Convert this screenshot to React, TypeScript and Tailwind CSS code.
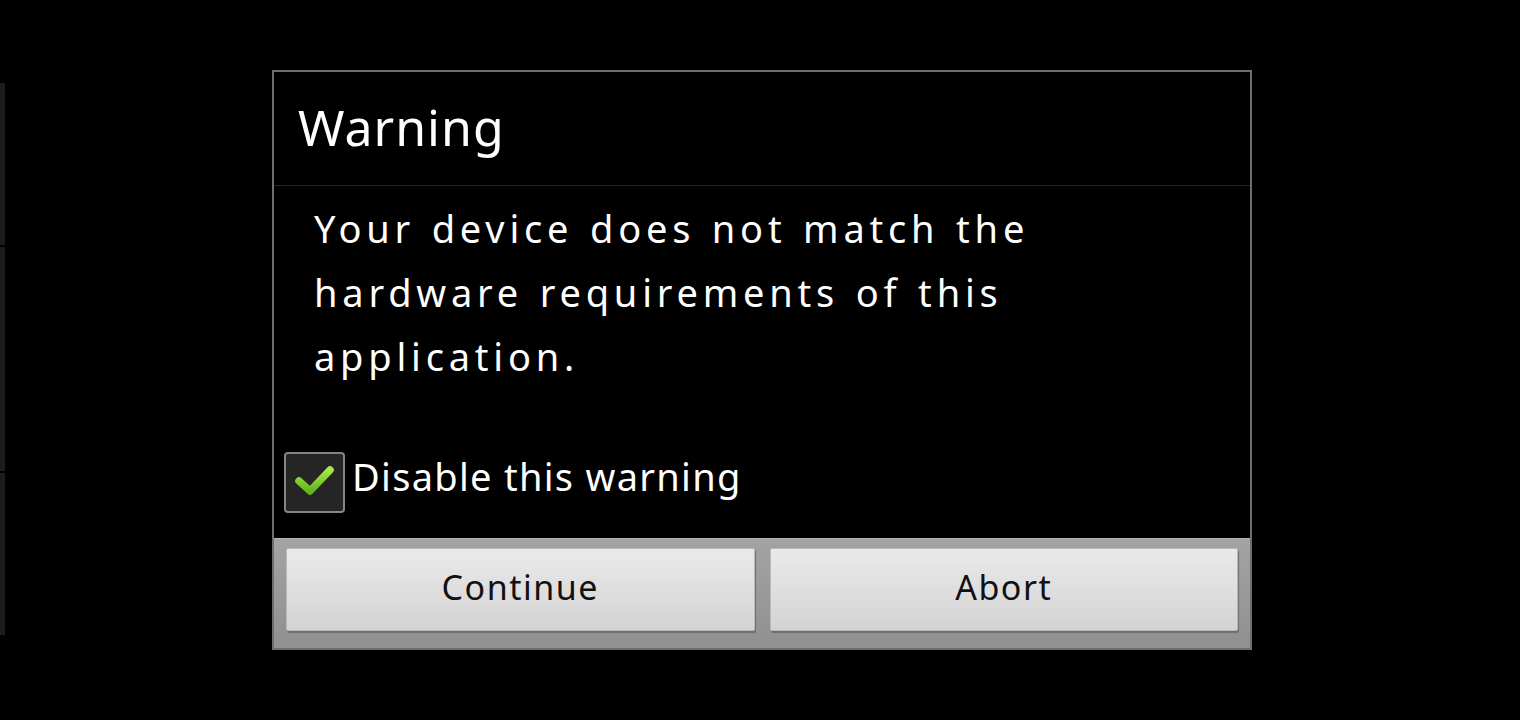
import React from "react";

export default function App() {
  return (
    <div
      className="relative w-[1520px] h-[720px] bg-black overflow-hidden"
      style={{ fontFamily: '"Noto Sans", "Noto Sans CJK JP", sans-serif' }}
    >
      {/* faint background list strip on the left edge */}
      <div className="flex flex-col w-[5px] pt-[83px] gap-[2px]">
        <div className="h-[162px] bg-[#1c1c1c]" />
        <div className="h-[224px] bg-[#1c1c1c]" />
        <div className="h-[162px] bg-[#1c1c1c]" />
      </div>

      {/* dialog */}
      <div className="absolute left-[272px] top-[70px] w-[980px] h-[580px] border-2 border-[#6e6e6e] bg-black flex flex-col">
        <div className="h-[114px] flex items-center pl-[24px] pb-[4px] border-b border-[#262626]">
          <span className="text-white text-[50px] leading-none tracking-[1px]">Warning</span>
        </div>
        <div className="flex-1 flex flex-col">
          <p className="text-white text-[38px] leading-[64px] tracking-[4.8px] [word-spacing:2px] pl-[40px] pr-[40px] pt-[10px]">
            Your device does not match the
            <br />
            hardware requirements of this
            <br />
            application.
          </p>
          <div className="flex-1" />
          <div className="flex items-center pl-[10px] pb-[25px] gap-[7px]">
            <div className="w-[61px] h-[61px] rounded-[4px] border-2 border-[#858585] bg-[#252525] flex items-center justify-center">
              <svg width="57" height="57" viewBox="0 0 57 57">
                <defs>
                  <linearGradient id="chk" x1="0" y1="0" x2="0" y2="1">
                    <stop offset="0" stopColor="#a4ea48" />
                    <stop offset="1" stopColor="#64b51c" />
                  </linearGradient>
                </defs>
                <polyline
                  points="13,27 24,37 44,16"
                  fill="none"
                  stroke="url(#chk)"
                  strokeWidth="7.5"
                  strokeLinejoin="round"
                  strokeLinecap="round"
                />
              </svg>
            </div>
            <span className="text-white text-[38px] leading-none tracking-[1.3px] pb-[14px]">Disable this warning</span>
          </div>
        </div>
        <div className="h-[110px] bg-gradient-to-b from-[#a3a3a3] to-[#909090] border-t border-[#b4b4b4] flex gap-[15px] px-[12px] pt-[9px] pb-[17px]">
          <button className="flex-1 rounded-[2px] bg-gradient-to-b from-[#eaeaea] to-[#d3d3d3] border border-[#b9b9b9] shadow-[1px_2px_1px_#6f6f6f] text-[#111] text-[34px] tracking-[1.5px] pb-[4px] flex items-center justify-center">
            Continue
          </button>
          <button className="flex-1 rounded-[2px] bg-gradient-to-b from-[#eaeaea] to-[#d3d3d3] border border-[#b9b9b9] shadow-[1px_2px_1px_#6f6f6f] text-[#111] text-[34px] tracking-[1.5px] pb-[4px] flex items-center justify-center">
            Abort
          </button>
        </div>
      </div>
    </div>
  );
}
